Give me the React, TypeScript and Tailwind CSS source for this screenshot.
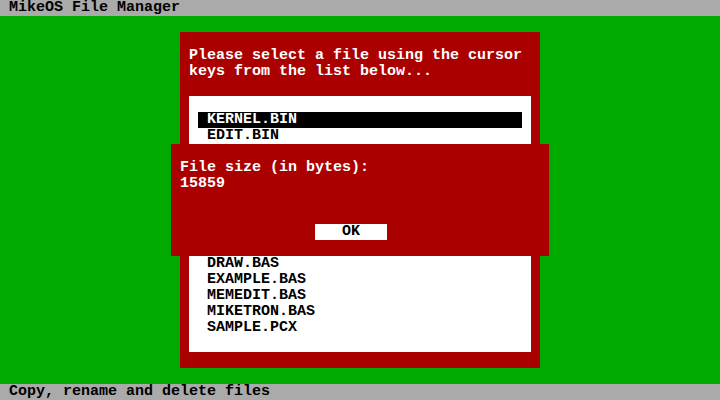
const files = [
  'KERNEL.BIN',
  'EDIT.BIN',
  'FILEMAN.BIN',
  'FISHER.BIN',
  'HANGMAN.BIN',
  'KEYBOARD.BIN',
  'MONITOR.BIN',
  'SERIAL.BIN',
  'VIEWER.BIN',
  'DRAW.BAS',
  'EXAMPLE.BAS',
  'MEMEDIT.BAS',
  'MIKETRON.BAS',
  'SAMPLE.PCX',
];

// rows 2..8 sit under the popup, so they are kept but not drawn
const hidden = (i: number) => i >= 2 && i <= 8;

function FileList({ selected }: { selected: number }) {
  return (
    <ul className="flex flex-col px-[9px] pt-[16px]">
      {files.map((name, i) => (
        <li
          key={name}
          className={
            i === selected
              ? 'h-[16px] bg-black pl-[9px] text-white'
              : hidden(i)
                ? 'invisible h-[16px] pl-[9px]'
                : 'h-[16px] pl-[9px] text-black'
          }
        >
          {name}
        </li>
      ))}
    </ul>
  );
}

function SizeDialog() {
  // sits on top of the file list, like the text-mode popup
  return (
    <div className="absolute left-[171px] top-[128px] flex h-[112px] w-[378px] flex-col bg-[#aa0000] pl-[9px] pt-[16px] text-white">
      <p className="h-[16px]">File size (in bytes):</p>
      <p className="h-[16px]">15859</p>
      <button className="ml-[135px] mt-[32px] h-[16px] w-[72px] bg-white text-center text-black">
        OK
      </button>
    </div>
  );
}

export default function App() {
  return (
    <div
      className="flex h-[400px] w-[720px] flex-col overflow-hidden bg-[#00aa00] text-[15px] font-bold leading-[16px] whitespace-pre"
      style={{ fontFamily: '"Liberation Mono", "DejaVu Sans Mono", monospace' }}
    >
      <div className="h-[16px] bg-[#aaaaaa] pl-[9px] text-black">MikeOS File Manager</div>

      <div className="relative flex-1">
        <div className="ml-[180px] mt-[16px] flex h-[336px] w-[360px] flex-col bg-[#aa0000] pl-[9px] pt-[16px]">
          <p className="h-[16px] text-white">Please select a file using the cursor</p>
          <p className="h-[16px] text-white">keys from the list below...</p>
          <div className="mt-[16px] h-[256px] w-[342px] overflow-hidden bg-white">
            <FileList selected={0} />
          </div>
        </div>
        <SizeDialog />
      </div>

      <div className="h-[16px] bg-[#aaaaaa] pl-[9px] text-black">Copy, rename and delete files</div>
    </div>
  );
}
